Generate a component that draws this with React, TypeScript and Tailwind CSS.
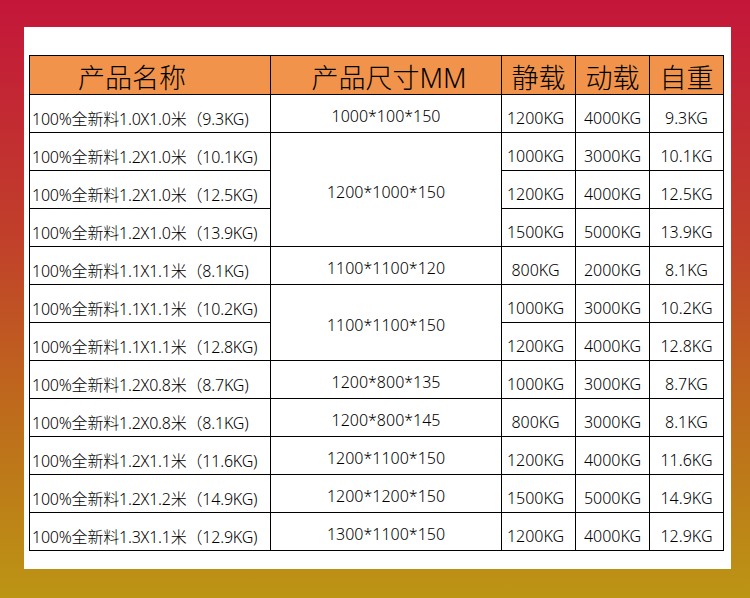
const rows: { name: string; size?: string; span?: number; st: string; dy: string; w: string }[] = [
  { name: "100%全新料1.0X1.0米（9.3KG)", size: "1000*100*150", st: "1200KG", dy: "4000KG", w: "9.3KG" },
  { name: "100%全新料1.2X1.0米（10.1KG)", size: "1200*1000*150", span: 3, st: "1000KG", dy: "3000KG", w: "10.1KG" },
  { name: "100%全新料1.2X1.0米（12.5KG)", st: "1200KG", dy: "4000KG", w: "12.5KG" },
  { name: "100%全新料1.2X1.0米（13.9KG)", st: "1500KG", dy: "5000KG", w: "13.9KG" },
  { name: "100%全新料1.1X1.1米（8.1KG)", size: "1100*1100*120", st: "800KG", dy: "2000KG", w: "8.1KG" },
  { name: "100%全新料1.1X1.1米（10.2KG)", size: "1100*1100*150", span: 2, st: "1000KG", dy: "3000KG", w: "10.2KG" },
  { name: "100%全新料1.1X1.1米（12.8KG)", st: "1200KG", dy: "4000KG", w: "12.8KG" },
  { name: "100%全新料1.2X0.8米（8.7KG)", size: "1200*800*135", st: "1000KG", dy: "3000KG", w: "8.7KG" },
  { name: "100%全新料1.2X0.8米（8.1KG)", size: "1200*800*145", st: "800KG", dy: "3000KG", w: "8.1KG" },
  { name: "100%全新料1.2X1.1米（11.6KG)", size: "1200*1100*150", st: "1200KG", dy: "4000KG", w: "11.6KG" },
  { name: "100%全新料1.2X1.2米（14.9KG)", size: "1200*1200*150", st: "1500KG", dy: "5000KG", w: "14.9KG" },
  { name: "100%全新料1.3X1.1米（12.9KG)", size: "1300*1100*150", st: "1200KG", dy: "4000KG", w: "12.9KG" },
];

const cell = "border border-black p-0 align-middle";

export default function App() {
  return (
    <div className="w-[750px] h-[598px] bg-[linear-gradient(180deg,#c4163a_0%,#c1402a_40%,#be6a1c_68%,#bc9514_100%)] pt-[27px] pl-[24px] font-['Noto_Sans','Noto_Sans_CJK_SC',sans-serif] font-light text-black">
      <div className="w-[707px] h-[542px] bg-white pt-[28px] pl-[5px]">
        <table className="table-fixed border-collapse w-[694px]">
          <colgroup>
            <col className="w-[241px]" />
            <col className="w-[231px]" />
            <col className="w-[74px]" />
            <col className="w-[74px]" />
            <col className="w-[74px]" />
          </colgroup>
          <thead>
            <tr className="h-[39px] bg-[#f1934b] text-[27px] leading-none">
              <th className={`${cell} text-left font-light`}>
                <div className="pl-[48px] pt-[5px]">产品名称</div>
              </th>
              <th className={`${cell} font-light`}>
                <div className="pt-[5px] pl-[6px]">产品尺寸MM</div>
              </th>
              <th className={`${cell} font-light`}>
                <div className="pt-[5px]">静载</div>
              </th>
              <th className={`${cell} font-light`}>
                <div className="pt-[5px]">动载</div>
              </th>
              <th className={`${cell} font-light`}>
                <div className="pt-[5px]">自重</div>
              </th>
            </tr>
          </thead>
          <tbody className="text-[16px] leading-none">
            {rows.map((r, i) => (
              <tr key={i} className="h-[38px]">
                <td className={`${cell} text-left whitespace-nowrap`}>
                  <div className="pl-[2px] pt-[10px] tracking-[-0.2px]">{r.name}</div>
                </td>
                {r.size && (
                  <td className={`${cell} text-center`} rowSpan={r.span ?? 1}>
                    <div className="pt-[4px]">{r.size}</div>
                  </td>
                )}
                <td className={`${cell} text-center`}>
                  <div className="pt-[9px] pr-[6px]">{r.st}</div>
                </td>
                <td className={`${cell} text-center`}>
                  <div className="pt-[9px]">{r.dy}</div>
                </td>
                <td className={`${cell} text-center`}>
                  <div className="pt-[9px]">{r.w}</div>
                </td>
              </tr>
            ))}
          </tbody>
        </table>
      </div>
    </div>
  );
}
